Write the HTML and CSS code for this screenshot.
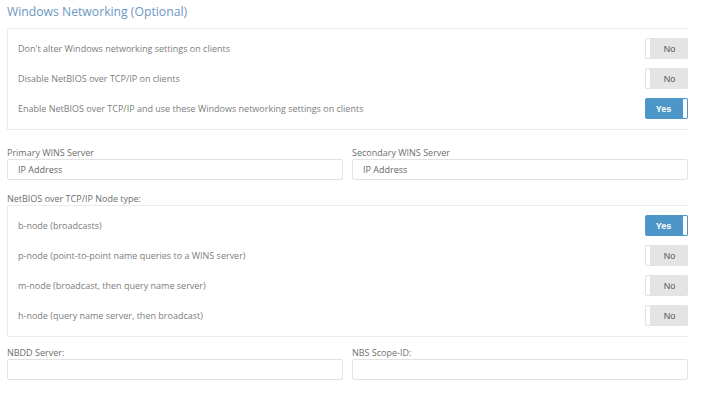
FILE: index.html
```html
<!DOCTYPE html>
<html lang="en">
<head>
  <meta charset="UTF-8" />
  <title>Windows Networking</title>
  <link rel="stylesheet" href="styles.css">
</head>
<body>

  <!-- Заголовок секции -->
  <h2 class="section-title">Windows Networking (Optional)</h2>

  <!-- Режим Windows networking -->
  <div class="option-box">
    <div class="option-row">
      <span class="option-text">Don't alter Windows networking settings on clients</span>
      <span class="switch"><span class="knob"></span><span class="switch-label">No</span></span>
    </div>
    <div class="option-row">
      <span class="option-text">Disable NetBIOS over TCP/IP on clients</span>
      <span class="switch"><span class="knob"></span><span class="switch-label">No</span></span>
    </div>
    <div class="option-row">
      <span class="option-text">Enable NetBIOS over TCP/IP and use these Windows networking settings on clients</span>
      <span class="switch on"><span class="switch-label">Yes</span><span class="knob"></span></span>
    </div>
  </div>

  <!-- WINS серверы -->
  <div class="field-grid wins">
    <label class="field">
      <span class="field-label">Primary WINS Server</span>
      <input class="field-input" type="text" placeholder="IP Address">
    </label>
    <label class="field">
      <span class="field-label">Secondary WINS Server</span>
      <input class="field-input" type="text" placeholder="IP Address">
    </label>
  </div>

  <!-- Тип узла NetBIOS -->
  <div class="field-label node-title">NetBIOS over TCP/IP Node type:</div>
  <div class="option-box node-box">
    <div class="option-row">
      <span class="option-text">b-node (broadcasts)</span>
      <span class="switch on"><span class="switch-label">Yes</span><span class="knob"></span></span>
    </div>
    <div class="option-row">
      <span class="option-text">p-node (point-to-point name queries to a WINS server)</span>
      <span class="switch"><span class="knob"></span><span class="switch-label">No</span></span>
    </div>
    <div class="option-row">
      <span class="option-text">m-node (broadcast, then query name server)</span>
      <span class="switch"><span class="knob"></span><span class="switch-label">No</span></span>
    </div>
    <div class="option-row">
      <span class="option-text">h-node (query name server, then broadcast)</span>
      <span class="switch"><span class="knob"></span><span class="switch-label">No</span></span>
    </div>
  </div>

  <!-- NBDD / Scope -->
  <div class="field-grid nbdd">
    <label class="field">
      <span class="field-label">NBDD Server:</span>
      <input class="field-input" type="text">
    </label>
    <label class="field">
      <span class="field-label">NBS Scope-ID:</span>
      <input class="field-input" type="text">
    </label>
  </div>

</body>
</html>
```

FILE: styles.css
```css
/* ======= База ======= */
body {
  margin: 0;
  padding: 0 13px 0 7px;
  background: #fff;
  font-family: "Open Sans", "Noto Sans", sans-serif;
  color: #7a7a7a;
  font-size: 9px;
}

/* ======= Заголовок ======= */
.section-title {
  margin: 0;
  padding-top: 3px;
  height: 25px;
  font-size: 12.2px;
  font-weight: 400;
  line-height: 18px;
  color: #6b97c2;
}

/* ======= Блок с опциями ======= */
.option-box {
  border: 1px solid #ececec;
  border-right: none;
  padding: 9px 0 10px 10px;
  display: flex;
  flex-direction: column;
  gap: 9px;
}

.option-row {
  display: flex;
  align-items: center;
  justify-content: space-between;
  height: 21px;
}

.option-text {
  color: #7d7d7d;
}

/* ======= Переключатель Yes/No ======= */
.switch {
  display: flex;
  width: 43px;
  height: 21px;
  border-radius: 2px;
  background: #e4e4e4;
  font-family: "Liberation Sans", Arial, sans-serif;
  font-size: 9px;
  color: #555;
  overflow: hidden;
}
.switch .knob {
  width: 6px;
  background: #fff;
  border: 1px solid #e2e2e2;
  border-radius: 2px;
  box-sizing: border-box;
}
.switch-label {
  flex: 1;
  display: flex;
  align-items: center;
  justify-content: center;
}
.switch.on {
  background: #4d97c8;
  color: #fff;
  font-weight: bold;
}
.switch.on .knob {
  border-color: #4d97c8;
}

/* ======= Поля ввода ======= */
.field-grid {
  display: grid;
  grid-template-columns: 1fr 1fr;
  column-gap: 9px;
}
.wins {
  margin-top: 16px;
}
.nbdd {
  margin-top: 9px;
}

.field {
  display: flex;
  flex-direction: column;
}
.field-label {
  color: #6e6e6e;
  line-height: 13px;
  height: 13px;
}
.field-input {
  height: 21px;
  box-sizing: border-box;
  border: 1px solid #e2e2e2;
  border-radius: 2px;
  padding: 0 10px;
  font-family: inherit;
  font-size: 9px;
  color: #666;
  outline: none;
}
.field-input::placeholder {
  color: #666;
}

/* ======= Тип узла ======= */
.node-title {
  margin-top: 12px;
}
.node-box {
  margin-top: 0;
}
```
